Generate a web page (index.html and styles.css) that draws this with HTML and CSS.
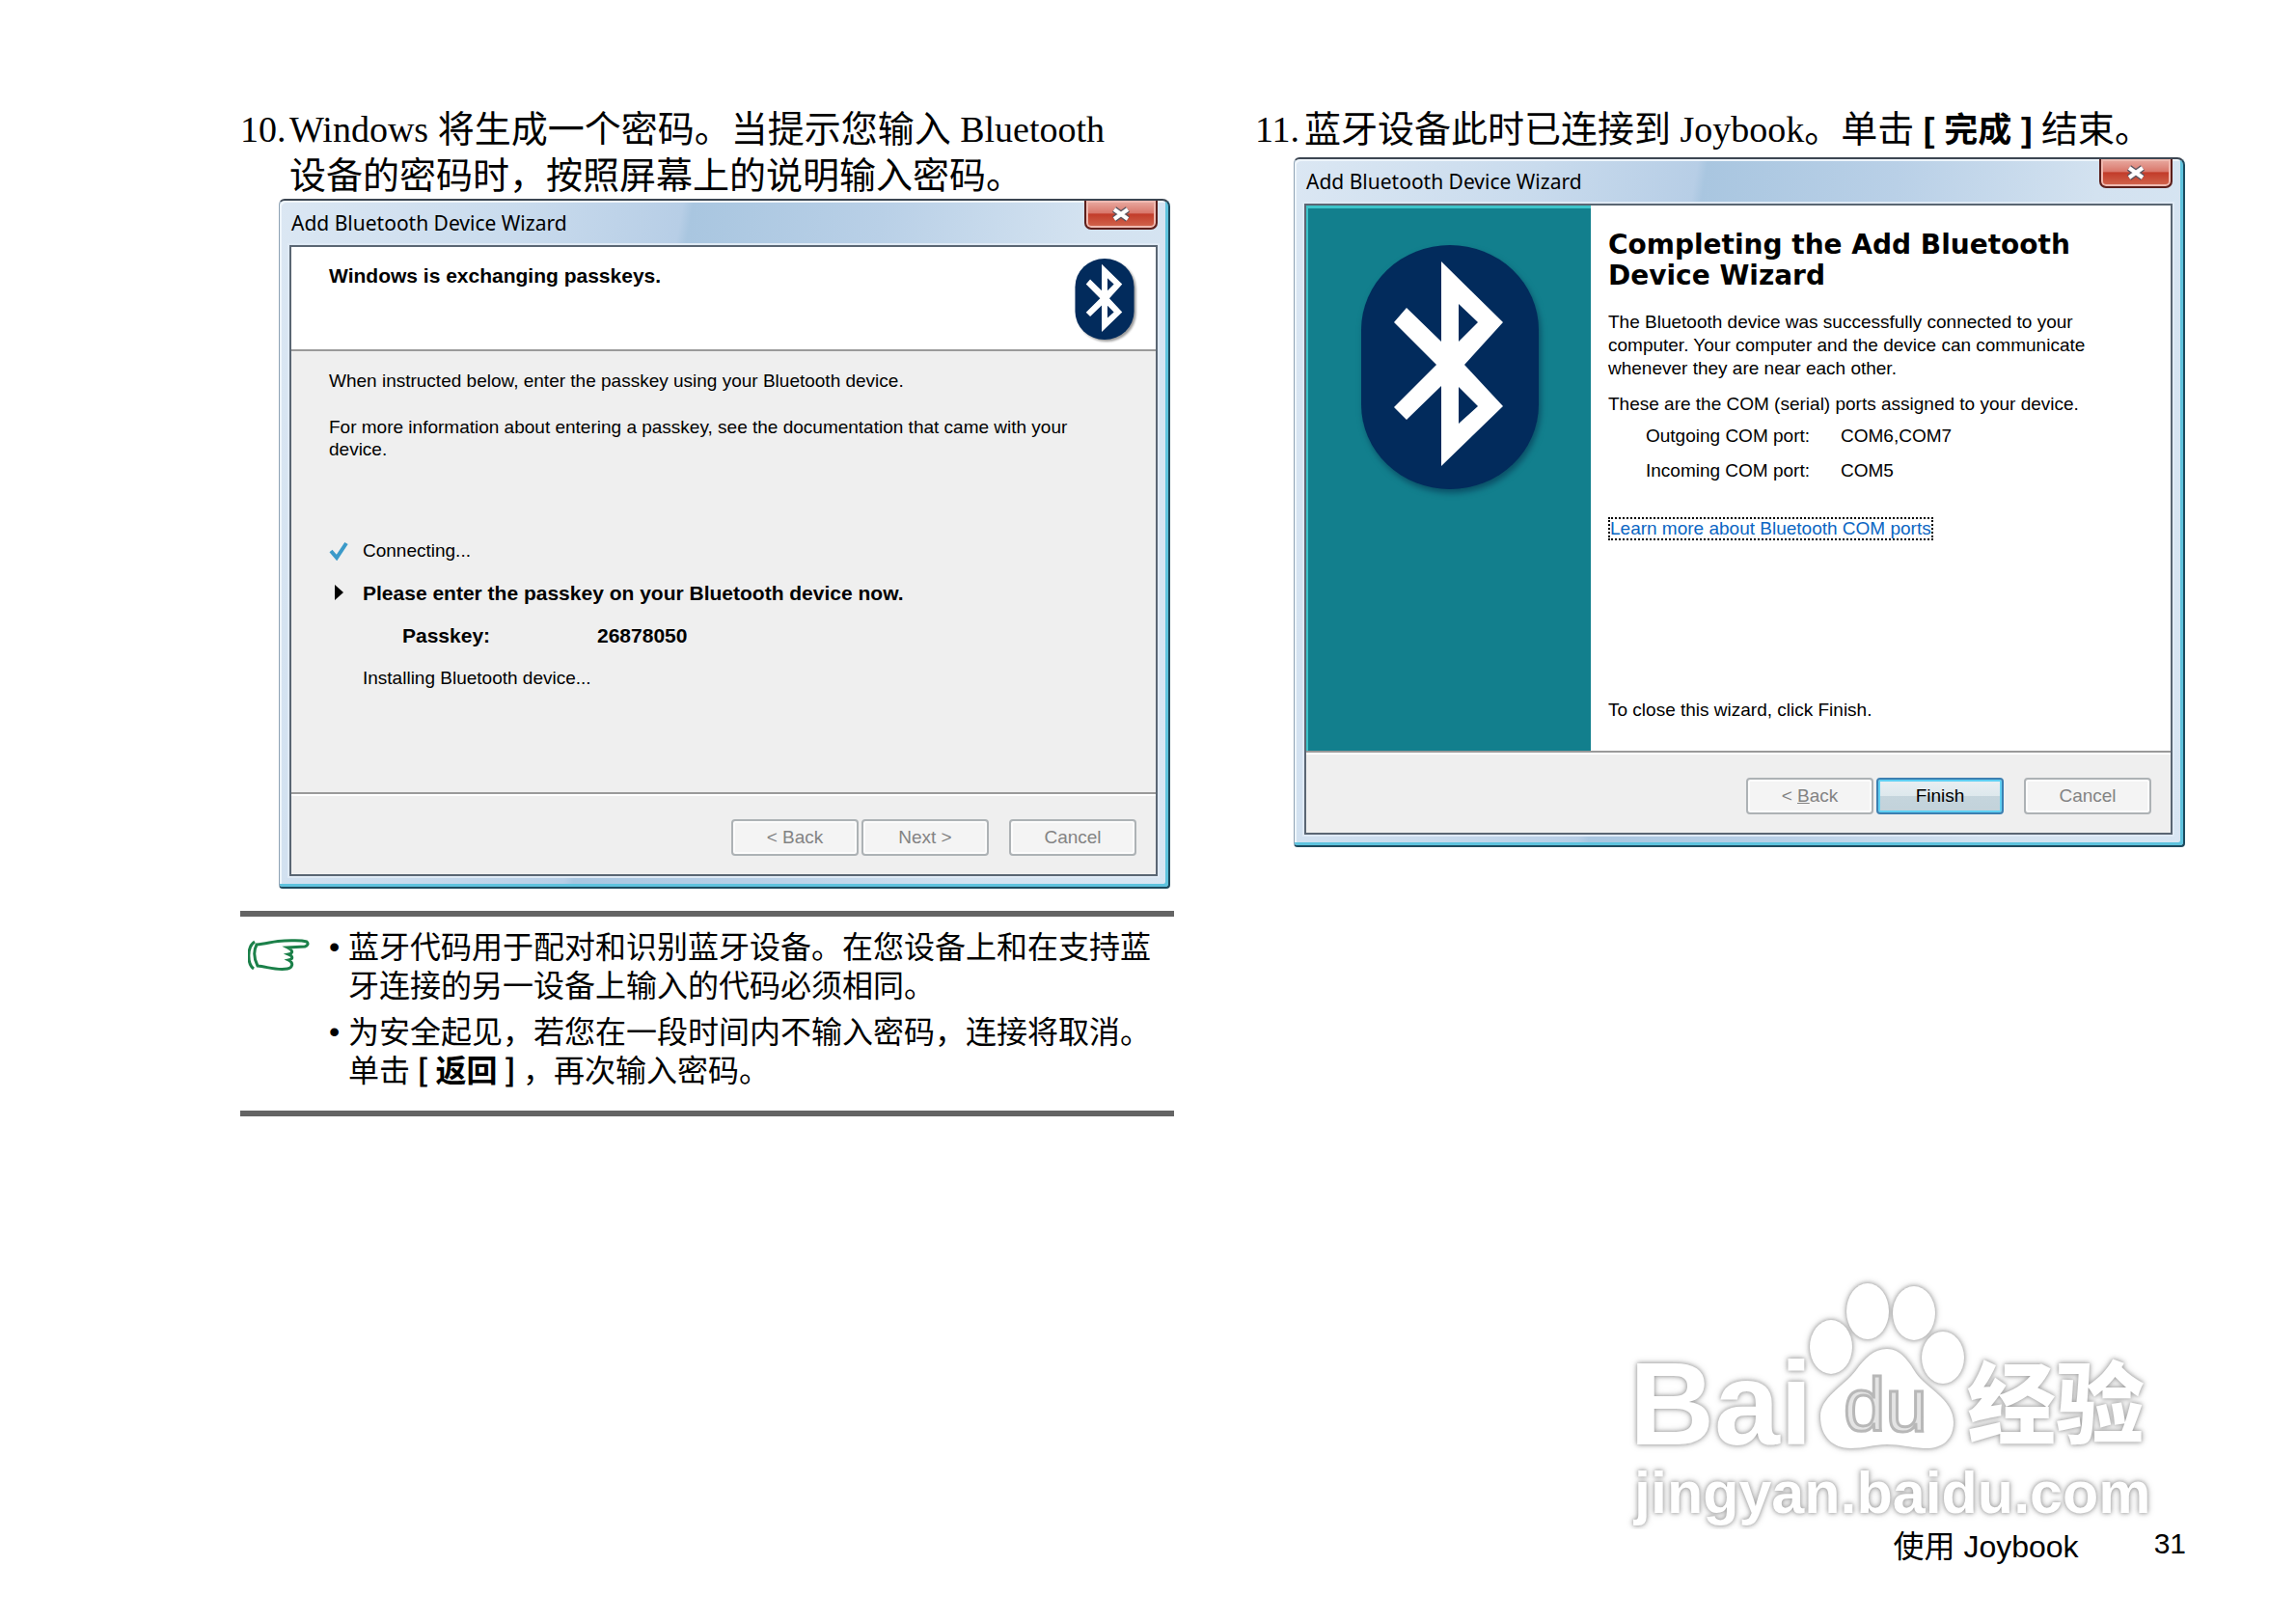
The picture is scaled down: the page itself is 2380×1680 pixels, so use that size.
FILE: index.html
```html
<!DOCTYPE html>
<html lang="zh-CN">
<head>
<meta charset="utf-8">
<title>使用 Joybook</title>
<link rel="stylesheet" href="styles.css">
</head>
<body>
<svg class="defs" width="0" height="0" aria-hidden="true">
  <symbol id="bluetooth" viewBox="0 0 184 253">
    <rect x="0" y="0" width="184" height="253" rx="92" ry="88" fill="#022b5c"/>
    <path fill="#fff" fill-rule="evenodd" d="M83 17 L147 80 L107 124 L147 167 L83 229 V146 L47 181 L34 168 L78 124 L34 80 L47 65 L83 100 Z M101 61 V100 L121 80 Z M101 147 V185 L121 167 Z"/>
  </symbol>
</svg>
<main class="spread">
  <section class="column">
    <div class="step">
      <span class="step-no">10.</span>
      <p class="step-text">Windows 将生成一个密码。当提示您输入 Bluetooth<br>设备的密码时，按照屏幕上的说明输入密码。</p>
    </div>
    <article class="window">
      <header class="titlebar">
        <span class="title">Add Bluetooth Device Wizard</span>
        <button class="close" type="button" aria-label="Close"><svg viewBox="0 0 22 16"><path d="M4 3 L18 13 M18 3 L4 13"/><path class="x" d="M4 3 L18 13 M18 3 L4 13"/></svg></button>
      </header>
      <div class="client">
        <div class="banner">
          <strong>Windows is exchanging passkeys.</strong>
          <svg class="badge"><use href="#bluetooth"/></svg>
        </div>
        <div class="progress">
          <p class="instruct">When instructed below, enter the passkey using your Bluetooth device.</p>
          <p class="more">For more information about entering a passkey, see the documentation that came with your<br>device.</p>
          <ul class="tasks">
            <li><svg class="mark" viewBox="0 0 20 20"><path d="M2 10 L8 17 L18 2" fill="none" stroke="#3b9ac9" stroke-width="4"/></svg>Connecting...</li>
            <li class="current"><svg class="mark" viewBox="0 0 20 20"><path d="M6 1 L15 9 L6 17 Z"/></svg>Please enter the passkey on your Bluetooth device now.</li>
            <li class="passkey"><span>Passkey:</span><span>26878050</span></li>
            <li><span class="mark"></span>Installing Bluetooth device...</li>
          </ul>
        </div>
        <footer class="actions">
          <button type="button" disabled>&lt; Back</button>
          <button type="button" disabled>Next &gt;</button>
          <button type="button" class="cancel" disabled>Cancel</button>
        </footer>
      </div>
    </article>
    <aside class="note">
      <svg class="hand" viewBox="0 0 64 34"><path d="M7 3 C-1 8 -1 26 6 31"/><path d="M9 6 C20 5 28 2 38 2 C48 2 54 1 61 3 C63 5 62 7 59 8 L41 9 C47 12 47 15 42 16 C47 18 47 21 42 22 C48 25 46 30 41 31 C30 33 20 29 10 28 C6 20 6 12 9 6 Z"/></svg>
      <ul>
        <li><span class="dot">•</span><p>蓝牙代码用于配对和识别蓝牙设备。在您设备上和在支持蓝<br>牙连接的另一设备上输入的代码必须相同。</p></li>
        <li><span class="dot">•</span><p>为安全起见，若您在一段时间内不输入密码，连接将取消。<br>单击 <b>[ 返回 ]</b> ，再次输入密码。</p></li>
      </ul>
    </aside>
  </section>
  <section class="column">
    <div class="step step-short">
      <span class="step-no">11.</span>
      <p class="step-text">蓝牙设备此时已连接到 Joybook。单击 <b>[ 完成 ]</b> 结束。</p>
    </div>
    <article class="window">
      <header class="titlebar">
        <span class="title">Add Bluetooth Device Wizard</span>
        <button class="close" type="button" aria-label="Close"><svg viewBox="0 0 22 16"><path d="M4 3 L18 13 M18 3 L4 13"/><path class="x" d="M4 3 L18 13 M18 3 L4 13"/></svg></button>
      </header>
      <div class="client">
        <div class="finish">
          <div class="side"><svg class="emblem"><use href="#bluetooth"/></svg></div>
          <div class="summary">
            <h2>Completing the Add Bluetooth<br>Device Wizard</h2>
            <p>The Bluetooth device was successfully connected to your<br>computer. Your computer and the device can communicate<br>whenever they are near each other.</p>
            <p class="ports-intro">These are the COM (serial) ports assigned to your device.</p>
            <dl>
              <dt>Outgoing COM port:</dt><dd>COM6,COM7</dd>
              <dt>Incoming COM port:</dt><dd>COM5</dd>
            </dl>
            <a href="#com-ports">Learn more about Bluetooth COM ports</a>
            <p class="closing">To close this wizard, click Finish.</p>
          </div>
        </div>
        <footer class="actions">
          <button type="button" disabled>&lt; <u>B</u>ack</button>
          <button type="button" class="default">Finish</button>
          <button type="button" class="cancel" disabled>Cancel</button>
        </footer>
      </div>
    </article>
  </section>
</main>
<footer class="page-foot">
  <svg class="watermark" viewBox="0 0 560 276" role="img" aria-label="Baidu 经验">
    <g class="outline">
      <text class="wm-name" x="6" y="188">Bai</text>
      <ellipse cx="215" cy="87" rx="22" ry="28"/>
      <ellipse cx="253" cy="50" rx="22" ry="29"/>
      <ellipse cx="301" cy="52" rx="22" ry="28"/>
      <ellipse cx="331" cy="98" rx="22" ry="27"/>
      <path d="M273 89 C287 89 295 101 303 114 C313 129 342 141 342 165 C342 185 328 193 311 192 C295 191 287 188 273 188 C259 188 251 192 235 192 C218 192 204 181 204 159 C204 139 227 129 241 111 C250 99 259 89 273 89 Z"/>
      <text class="wm-cjk" x="356" y="180">经验</text>
      <text class="wm-url" x="11" y="259">jingyan.baidu.com</text>
    </g>
    <text class="wm-du" x="228" y="174">du</text>
  </svg>
  <div class="folio"><span>使用 Joybook</span><span class="num">31</span></div>
</footer>
</body>
</html>
```
FILE: styles.css
```css
* { box-sizing: border-box; }
body {
  margin: 0;
  min-height: 100vh;
  display: flex;
  flex-direction: column;
  background: #fff;
  color: #000;
  font-family: "Liberation Sans", "Noto Sans CJK SC", sans-serif;
}
p, ul, dl, dd, h2 { margin: 0; padding: 0; }
ul { list-style: none; }
.defs { position: absolute; }

.spread {
  display: grid;
  grid-template-columns: minmax(0, 1fr) minmax(0, 1fr);
  gap: 84px;
  padding: 110px 111px 0 249px;
}
.step {
  display: grid;
  grid-template-columns: 51px 1fr;
  font: 38px/48px "Liberation Serif", "Noto Sans CJK SC", serif;
}
.step-short { padding-bottom: 4px; }
.step-text { white-space: nowrap; }
.step b { font-family: "Liberation Sans", "Noto Sans CJK SC", sans-serif; font-size: 35px; }

/* Aero dialog */
.window {
  margin: 0 4px 0 40px;
  padding: 0 11px 11px 10px;
  border: 2px solid #1d4a5e;
  border-top-color: #3c4652;
  border-left: 1px solid #8fa3b5;
  border-radius: 6px 8px 4px 4px;
  background: linear-gradient(100deg, #dbe7f3 0, #c9dbed 24%, #b7cee6 40%, #a9c6e0 41%, #b9d0e7 60%, #d3e2f0 80%, #d8e6f3 100%);
  box-shadow: inset -3px -3px 0 #5ec3de, inset 2px 2px 0 #eef5fb;
  font-size: 19px;
  line-height: 24px;
}
.titlebar {
  display: flex;
  justify-content: space-between;
  height: 46px;
}
.title {
  padding: 11px 0 0 2px;
  font: 21px/24px "Noto Sans", sans-serif;
}
.close {
  display: grid;
  place-items: center;
  width: 76px;
  height: 30px;
  padding: 0;
  border: 2px solid #5b1f1c;
  border-top: 0;
  border-radius: 0 0 7px 7px;
  background: linear-gradient(#e9aca3 0, #d9786c 45%, #c23c2a 50%, #d2674f 100%);
  box-shadow: inset 0 0 0 2px #efb9b0;
}
.close svg { width: 22px; height: 16px; fill: none; stroke: #5a5560; stroke-width: 7; }
.close .x { stroke: #fff; stroke-width: 4; }
.client {
  border: 2px solid #5a6673;
  background: #efefef;
  box-shadow: 0 0 0 2px #dfeaf5;
}
.banner {
  display: flex;
  justify-content: space-between;
  height: 108px;
  padding: 12px 21px 0 39px;
  border-bottom: 2px solid #9a9a9a;
  background: #fff;
}
.banner strong { padding-top: 6px; font-size: 21px; }
.badge { width: 64px; height: 84px; filter: drop-shadow(2px 2px 1px #999); }
.progress { height: 457px; padding: 19px 39px 0; white-space: nowrap; }
.more { margin-top: 24px; line-height: 23px; }
.tasks { margin-top: 82px; }
.tasks li { display: flex; align-items: center; height: 24px; margin-bottom: 20px; }
.mark { width: 20px; height: 20px; margin-right: 15px; }
.tasks .current, .tasks .passkey { font-weight: bold; font-size: 21px; }
.tasks .passkey { display: grid; grid-template-columns: 202px 1fr; padding-left: 76px; }
.actions {
  display: flex;
  gap: 3px;
  justify-content: flex-end;
  height: 85px;
  padding: 26px 20px 0;
  border-top: 2px solid #9a9a9a;
  box-shadow: inset 0 2px 0 #fff;
}
.actions button {
  width: 132px;
  height: 38px;
  padding: 0;
  border: 2px solid #adb2b5;
  border-radius: 4px;
  background: #f4f4f4;
  box-shadow: inset 0 0 0 2px #fcfcfc;
  color: #838383;
  font: inherit;
}
.actions .cancel { margin-left: 18px; }
.actions .default {
  border-color: #3c7fb1;
  background: linear-gradient(#e9eff2 0, #dde8ed 50%, #c5d5dd 50%, #c2d2da 100%);
  box-shadow: inset 0 0 0 2px #5fd0f3;
  color: #000;
}

.finish { display: flex; height: 565px; background: #fff; }
.side {
  display: grid;
  justify-content: center;
  align-content: start;
  width: 295px;
  padding-top: 38px;
  border-top: 3px solid #3cc3c9;
  border-left: 2px solid #3cc3c9;
  background: #127f8d;
}
.emblem { width: 184px; height: 253px; filter: drop-shadow(2px 4px 3px #0a4f66); }
.summary { flex: 1; padding: 25px 0 0 18px; white-space: nowrap; }
.summary h2 { margin-bottom: 20px; font: bold 28px/32px "DejaVu Sans", sans-serif; }
.ports-intro { margin-top: 13px; }
dl { display: grid; grid-template-columns: 202px 1fr; row-gap: 12px; margin: 9px 0 36px 39px; }
.summary a {
  display: inline-block;
  border: 2px dotted #000;
  color: #0b66c3;
  line-height: 20px;
  text-decoration: none;
}
.closing { margin-top: 164px; }

/* Note block */
.note {
  display: flex;
  margin-top: 23px;
  padding: 9px 0 16px;
  border-top: 6px solid #646464;
  border-bottom: 6px solid #646464;
  font: 32px/40px "Noto Sans CJK SC", sans-serif;
  white-space: nowrap;
}
.hand { width: 64px; height: 34px; margin: 14px 20px 0 8px; fill: none; stroke: #1b8049; stroke-width: 3; }
.note li { display: grid; grid-template-columns: 20px 1fr; margin-bottom: 8px; }
.dot { font-family: "Liberation Sans", sans-serif; line-height: 44px; }

.page-foot {
  display: flex;
  flex-direction: column;
  align-items: flex-end;
  margin-top: auto;
  padding: 0 114px 59px;
}
.watermark { width: 560px; height: 276px; margin-right: 23px; }
.outline { fill: #fff; filter: drop-shadow(0 0 2px #999) drop-shadow(0 0 3px #ccc); }
.wm-name { font: bold 122px "Liberation Sans", sans-serif; }
.wm-cjk { font: 900 92px "Noto Sans CJK SC", sans-serif; }
.wm-url { font: bold 61px "Liberation Sans", sans-serif; }
.wm-du { font: 78px "Liberation Sans", sans-serif; fill: #e4e4e4; stroke: #b8b8b8; stroke-width: 3; }
.folio { display: flex; gap: 78px; font-size: 32px; line-height: 36px; }
.num { font-size: 30px; line-height: 30px; }
```
